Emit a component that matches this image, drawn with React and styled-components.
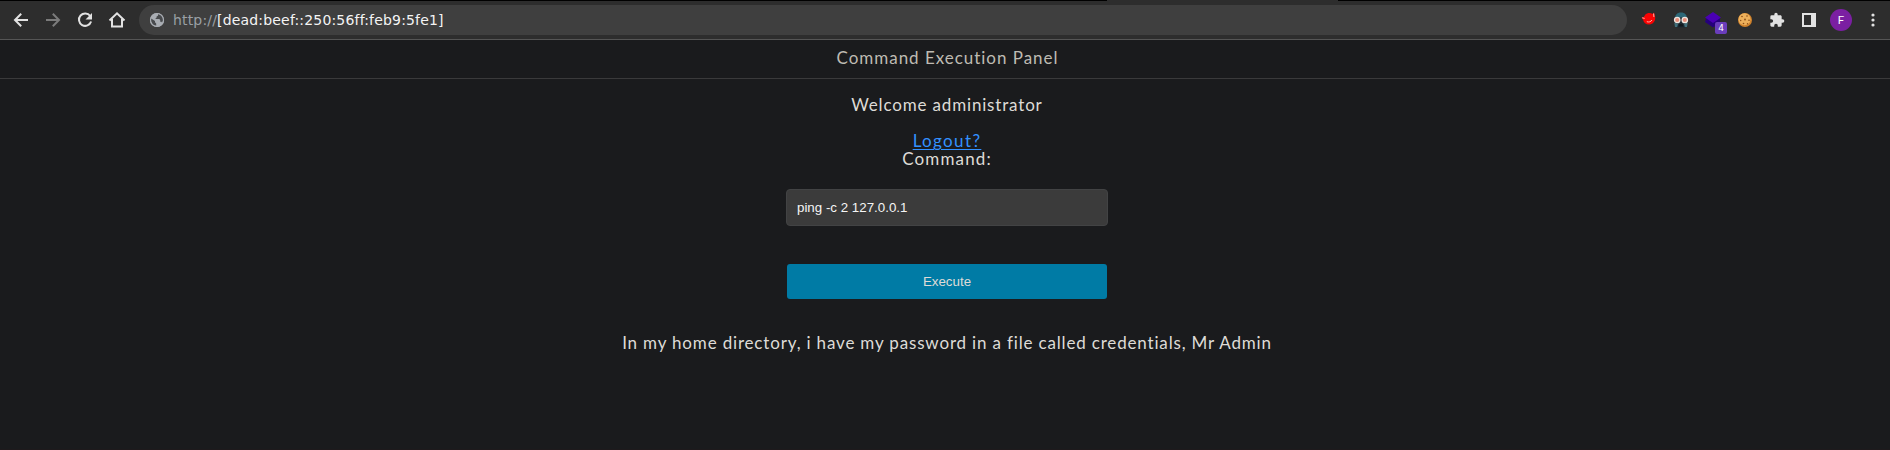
import React from "react";
import styled, { createGlobalStyle } from "styled-components";

const Global = createGlobalStyle`
  * { box-sizing: border-box; }
  html, body { margin: 0; height: 100%; background: #1a1b1d; }
  #root { height: 450px; }
`;

const Window = styled.div`
  height: 450px;
  display: flex;
  flex-direction: column;
  overflow: hidden;
  background: #1a1b1d;
  border-bottom: 1px solid #1e1a1c;
`;

const TabStrip = styled.div`
  height: 1px;
  flex: none;
  display: flex;
  justify-content: flex-start;
  padding-left: 1107px;
  background: #000;
`;

const ActiveTab = styled.div`
  width: 231px;
  height: 1px;
  background: #2d2d2d;
`;

const Toolbar = styled.header`
  height: 39px;
  flex: none;
  display: flex;
  align-items: center;
  padding: 0 0 0 5px;
  background: #2d2d2d;
  border-bottom: 1px solid #555;
`;

const ToolButton = styled.button`
  width: 32px;
  height: 32px;
  flex: none;
  display: flex;
  align-items: center;
  justify-content: center;
  padding: 0;
  border: 0;
  background: none;
  color: ${(p) => (p.$dim ? "#7b7b7b" : "#e2e2e2")};
`;

const AddressBar = styled.div`
  flex: none;
  width: 1488px;
  height: 30px;
  margin: 0 6px 0 6px;
  padding-left: 10px;
  display: flex;
  align-items: center;
  border-radius: 15px;
  background: #3f3f3f;
`;

const Url = styled.span`
  margin-left: 8px;
  font: 14px/20px "DejaVu Sans", sans-serif;
  letter-spacing: 0.17px;
  white-space: pre;
  color: #f4f4f4;
`;

const Scheme = styled.span`
  color: #9a9fa5;
`;

const Extensions = styled.div`
  display: flex;
  align-items: center;
`;

const ExtSlot = styled(ToolButton)`
  position: relative;
`;

const Badge = styled.span`
  position: absolute;
  left: 18px;
  top: 18px;
  width: 12px;
  height: 12px;
  border-radius: 2px;
  background: #6a3dbb;
  color: #fff;
  font: 9px/12px "DejaVu Sans", sans-serif;
  text-align: center;
`;

const Avatar = styled.span`
  width: 22px;
  height: 22px;
  border-radius: 50%;
  background: #7b1fa2;
  color: #fff;
  font: 11.5px/22px Roboto, sans-serif;
  text-align: center;
`;

const Page = styled.main`
  flex: 1;
  display: flex;
  flex-direction: column;
  align-items: center;
  padding-left: 4px;
  font: 17px/18px Lato, sans-serif;
  color: #dedbd7;
`;

const Title = styled.h1`
  align-self: stretch;
  height: 39px;
  margin: 0 0 0 -4px;
  padding: 9px 0 0 5px;
  border-bottom: 1px solid #3a3a3b;
  font: inherit;
  text-align: center;
  letter-spacing: ${(p) => p.$track}px;
  color: #bfbbb3;
`;

const Line = styled.p`
  margin: ${(p) => p.$gap}px 0 0;
  letter-spacing: ${(p) => p.$track}px;
  white-space: nowrap;
`;

const Link = styled.a`
  margin-top: 18px;
  letter-spacing: ${(p) => p.$track}px;
  color: #3391ff;
  text-decoration: underline;
  text-decoration-thickness: 1px;
  text-underline-offset: 2px;
`;

const CommandInput = styled.input`
  width: 322px;
  height: 37px;
  margin-top: 21px;
  padding: 0 10px;
  border: 1px solid #424344;
  border-radius: 4px;
  background: #3b3b3b;
  color: #f5f5f5;
  font: 13.333px "Liberation Sans", sans-serif;
  outline: none;
`;

const ExecuteButton = styled.button`
  width: 320px;
  height: 35px;
  margin-top: 38px;
  padding: 0;
  border: 0;
  border-radius: 3px;
  background: #007ba5;
  color: #dedbd7;
  font: 13.333px "Liberation Sans", sans-serif;
`;

const Stroke = ({ d }) => (
  <svg width="18" height="18" viewBox="0 0 18 18" fill="none" stroke="currentColor" strokeWidth="2">
    <path d={d} />
  </svg>
);

const Reload = () => (
  <svg width="18" height="18" viewBox="0 0 18 18" fill="none">
    <path d="M14.2 5A6.2 6.2 0 1 0 15.1 10.5" stroke="currentColor" strokeWidth="2" />
    <path d="M16 2v6.5H9.5Z" fill="currentColor" />
  </svg>
);

const Globe = () => (
  <svg width="16" height="16" viewBox="0 0 16 16">
    <circle cx="8" cy="8" r="7" fill="#a9adb3" />
    <path
      d="M1.8 6.2 6 9v1.2l1.2 1.3v2.3C4 13.6 1.8 11 1.8 8ZM9 1.9v1.4c0 .8-.7 1-1.4 1.1v1.2L6.2 7h4.1l.9 1v1.7h1.2l.8 1c1.4-2 1.4-5-.4-7.1C11.7 2.6 10.4 2 9 1.900Z"
      fill="#484a4d"
    />
    <circle cx="8" cy="8" r="6.5" fill="none" stroke="#a9adb3" strokeWidth="1.2" />
  </svg>
);

const RedBall = () => (
  <svg width="16" height="16" viewBox="0 0 16 16">
    <path d="M4 3C6 .8 9.500.5 11.500 2L13 .5l.8 2.700c1.500 4.600-1 9.300-5.800 9.300-3.200 0-5.200-1.700-5.800-4.500L.5 5.500l2.200-.2Z" fill="#f80404" />
    <path d="m1.200 5.800 2.500.6M12.600 1.500l.3 3.500M5.800 9.700c2.200.7 4 .1 5.200-1.700" stroke="#ffb4ac" fill="none" />
  </svg>
);

const Masked = () => (
  <svg width="16" height="16" viewBox="0 0 16 16">
    <path d="M2 8C1.500 3 4 .5 8 .5S14.500 3 14 8v3H2Z" fill="#2d6878" />
    <path d="M2.500 9h11v3.500L12 15.500H4l-1.500-3Z" fill="#1c2a32" />
    <path d="M1.300 10.500 2 15h2.200l.8-3M14.700 10.500 14 15h-2.200l-.8-3" fill="#40707c" />
    <path d="M.5 5.500h15V9h-15Z" fill="#2b2930" />
    <circle cx="4.200" cy="8" r="2.700" fill="#e98c78" stroke="#ece5df" strokeWidth="1.300" />
    <circle cx="11.800" cy="8" r="2.700" fill="#e98c78" stroke="#ece5df" strokeWidth="1.300" />
    <path d="M5.500 14.500 6.500 12h3l1 2.500Z" fill="#11171c" />
  </svg>
);

const Layers = () => (
  <svg width="16" height="16" viewBox="0 0 16 16">
    <path d="M1.500 5.500 0 10l8 5.500 7-5V5Z" fill="#25007c" />
    <path d="M8 0 16 5.500 8 11 0 5.500Z" fill="#4a00b4" />
  </svg>
);

const Cookie = () => (
  <svg width="16" height="16" viewBox="0 0 16 16">
    <circle cx="8" cy="8" r="7" fill="#d0822b" />
    <circle cx="7.500" cy="7.300" r="6" fill="#edb05b" />
    <g fill="#8a4c18">
      <circle cx="5" cy="4.500" r=".8" /><circle cx="10" cy="4" r=".8" />
      <circle cx="8" cy="7.500" r=".9" /><circle cx="3.700" cy="8.500" r=".7" />
      <circle cx="12" cy="8.300" r=".8" /><circle cx="6.500" cy="11.500" r=".8" />
      <circle cx="10.500" cy="11.700" r=".7" />
    </g>
  </svg>
);

const Puzzle = () => (
  <svg width="16" height="16" viewBox="0 0 24 24" fill="currentColor">
    <path d="M20.500 11H19V7c0-1.100-.9-2-2-2h-4V3.500a2.500 2.500 0 0 0-5 0V5H4a2 2 0 0 0-2 2v3.800h1.500a2.700 2.700 0 0 1 0 5.400H2V20c0 1.100.9 2 2 2h3.800v-1.500a2.700 2.700 0 0 1 5.400 0V22H17a2 2 0 0 0 2-2v-4h1.500a2.500 2.500 0 0 0 0-5Z" />
  </svg>
);

const SidePanel = () => (
  <svg width="14" height="14" viewBox="0 0 14 14">
    <path fillRule="evenodd" fill="currentColor" d="M0 0h14v14H0ZM2 2v10h7V2Z" />
  </svg>
);

const Dots = () => (
  <svg width="4" height="14" viewBox="0 0 4 14" fill="currentColor">
    <circle cx="2" cy="2" r="1.600" /><circle cx="2" cy="7" r="1.600" /><circle cx="2" cy="12" r="1.600" />
  </svg>
);

export default function App() {
  return (
    <Window>
      <Global />
      <TabStrip><ActiveTab /></TabStrip>
      <Toolbar>
        <ToolButton aria-label="Back"><Stroke d="M16 9H3.500M9.200 2.800 3 9l6.200 6.200" /></ToolButton>
        <ToolButton aria-label="Forward" $dim><Stroke d="M2 9h12.500M8.800 2.800 15 9l-6.200 6.200" /></ToolButton>
        <ToolButton aria-label="Reload"><Reload /></ToolButton>
        <ToolButton aria-label="Home"><Stroke d="M1.500 9.500 9 2.300l7.500 7.200M4 8v7.500h10V8" /></ToolButton>
        <AddressBar>
          <Globe />
          <Url><Scheme>http://</Scheme>[dead:beef::250:56ff:feb9:5fe1]</Url>
        </AddressBar>
        <Extensions>
          <ExtSlot><RedBall /></ExtSlot>
          <ExtSlot><Masked /></ExtSlot>
          <ExtSlot><Layers /><Badge>4</Badge></ExtSlot>
          <ExtSlot><Cookie /></ExtSlot>
          <ExtSlot><Puzzle /></ExtSlot>
          <ExtSlot><SidePanel /></ExtSlot>
          <ExtSlot><Avatar>F</Avatar></ExtSlot>
          <ExtSlot><Dots /></ExtSlot>
        </Extensions>
      </Toolbar>
      <Page>
        <Title $track={0.97}>Command Execution Panel</Title>
        <Line $gap={17} $track={0.83}>Welcome administrator</Line>
        <Link $track={1.35}>Logout?</Link>
        <Line $gap={0} $track={1.15}>Command:</Line>
        <CommandInput defaultValue="ping -c 2 127.0.0.1" />
        <ExecuteButton>Execute</ExecuteButton>
        <Line $gap={35} $track={0.83}>In my home directory, i have my password in a file called credentials, Mr Admin</Line>
      </Page>
    </Window>
  );
}
